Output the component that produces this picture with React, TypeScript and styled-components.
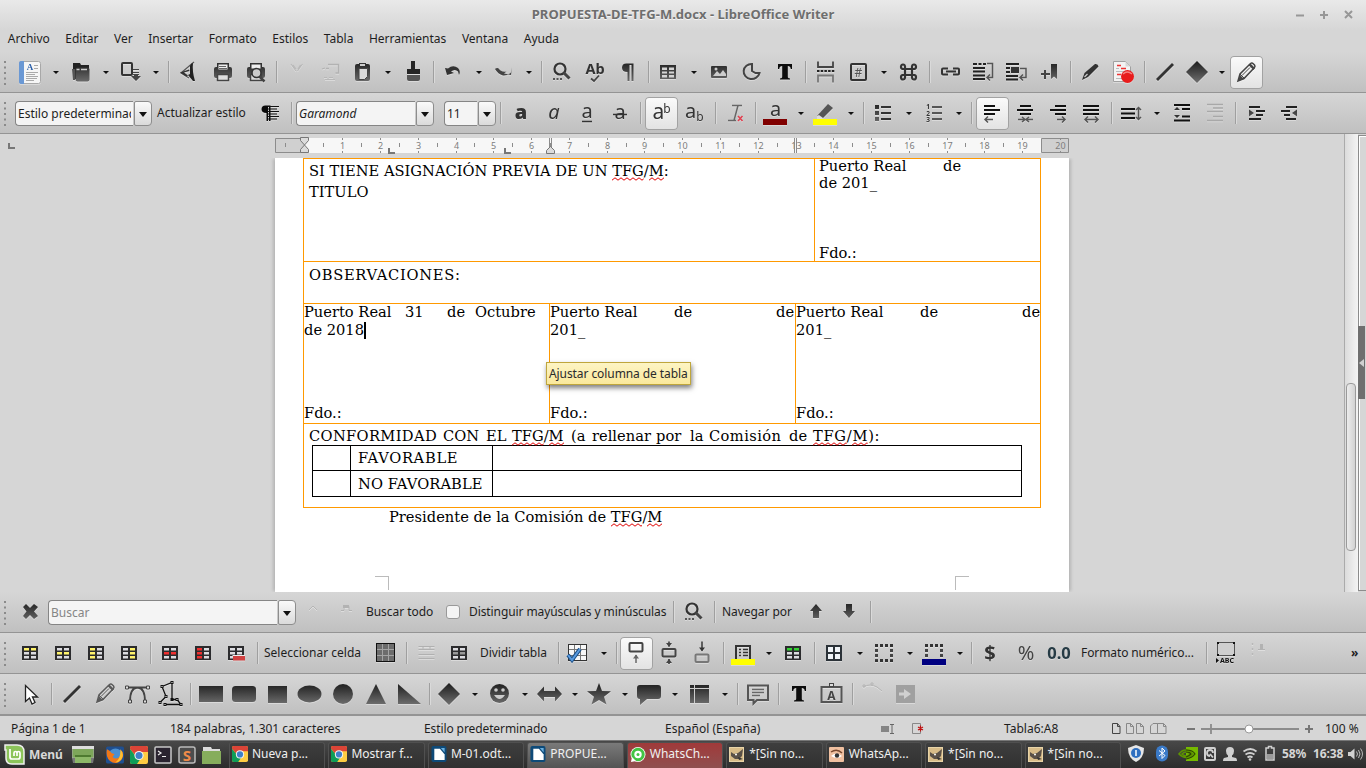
import React from "react";
import styled, { createGlobalStyle, css } from "styled-components";

const Global = createGlobalStyle`
  * { box-sizing: border-box; }
  body { margin: 0; background: #d6d6d6; overflow: hidden; }
`;

const UI = `"Noto Sans", "Open Sans", sans-serif`;
const ORANGE = "#ff9900";

const Window = styled.div`
  width: 1366px;
  height: 768px;
  display: flex;
  flex-direction: column;
  overflow: hidden;
  background: #d6d6d6;
  color: #1e1e1e;
  font: 12px/16px ${UI};
  white-space: pre;
`;

/* ---------- title and menu ---------- */

const Header = styled.header`
  height: 52px;
  flex: none;
  background: linear-gradient(#e9e9e9, #d6d6d6 30px);
`;
const TitleBar = styled.div`
  height: 28px;
  display: grid;
  grid-template-columns: 1fr auto 1fr;
  align-items: center;
`;
const Title = styled.h1`
  grid-column: 2;
  margin: 0;
  font: bold 13px/18px ${UI};
  letter-spacing: 0.03px;
  color: #6e6e6e;
  text-shadow: 0 1px 0 #f4f4f4;
`;
const WindowButtons = styled.div`
  justify-self: end;
  display: flex;
  gap: 9px;
  padding: 1px 11px 0 0;
`;
const MenuBar = styled.nav`
  display: flex;
  height: 21px;
  align-items: center;
`;
const MenuItem = styled.span`
  padding: 0 7.780px;
`;

/* ---------- toolbars ---------- */

const Toolbar = styled.div<{ $top?: number; $h?: number; $line?: number }>`
  flex: none;
  height: ${(p) => p.$h ?? 41}px;
  padding-top: ${(p) => p.$top ?? 4}px;
  display: flex;
  align-items: flex-start;
  background: linear-gradient(#d6d6d6, #c0c0c0);
  border-bottom: ${(p) => p.$line ?? 1}px solid #949494;
`;
const GripBox = styled.div`
  width: 14px;
  height: 33px;
  flex: none;
  padding: 5px 0 0 4px;
`;
const Tool = styled.div<{ $on?: boolean; $w?: number }>`
  width: ${(p) => p.$w ?? 33}px;
  height: 33px;
  flex: none;
  svg { display: block; overflow: visible; filter: drop-shadow(0 1px 0 rgba(255, 255, 255, 0.35)); }
  ${(p) =>
    p.$on &&
    css`
      background: linear-gradient(#fbfbfb, #e2e2e2);
      border-radius: 4px;
      box-shadow: inset 0 0 0 1px #a2a2a2;
    `}
`;
const Drop = styled.div`
  width: 17px;
  height: 33px;
  flex: none;
  padding: 15px 0 0 6px;
  &::before {
    content: "";
    display: block;
    width: 0;
    border: solid transparent;
    border-width: 3px 3px 0;
    border-top-color: #111;
  }
`;
const Sep = styled.div<{ $w?: number }>`
  width: ${(p) => p.$w ?? 8}px;
  height: 33px;
  flex: none;
  padding: 5px 0 0 ${(p) => Math.floor((p.$w ?? 8) / 2)}px;
  &::before {
    content: "";
    display: block;
    width: 2px;
    height: 22px;
    background: linear-gradient(90deg, #9f9f9f 1px, #dadada 1px);
  }
`;
const Label = styled.span<{ $w: number; $pl?: number; $ls?: number }>`
  width: ${(p) => p.$w}px;
  padding-left: ${(p) => p.$pl ?? 0}px;
  letter-spacing: ${(p) => p.$ls ?? 0}px;
  flex: none;
  line-height: 32px;
`;
const Combo = styled.div<{ $w: number }>`
  width: ${(p) => p.$w}px;
  height: 25px;
  margin-top: 4px;
  flex: none;
  display: flex;
`;
const Entry = styled.div<{ $muted?: boolean; $italic?: boolean }>`
  flex: 1;
  min-width: 0;
  overflow: hidden;
  margin-right: 1px;
  padding-left: 2px;
  border: 1px solid #858585;
  border-right: 0;
  border-radius: 4px 0 0 4px;
  background: #f4f4f4;
  line-height: 23px;
  color: ${(p) => (p.$muted ? "#858585" : "#1e1e1e")};
  font-style: ${(p) => (p.$italic ? "italic" : "normal")};
`;
const EntryText = styled.div`
  overflow: hidden;
  margin-right: 2px;
`;
const ComboButton = styled.div`
  width: 18px;
  border: 1px solid #8d8d8d;
  border-radius: 2px 4px 4px 2px;
  background: linear-gradient(#fafafa, #dadada);
  display: flex;
  justify-content: center;
  padding-top: 10px;
  &::before {
    content: "";
    width: 0;
    height: 0;
    border: solid transparent;
    border-width: 5px 4px 0;
    border-top-color: #111;
  }
`;
const CheckBox = styled.div`
  width: 14px;
  height: 14px;
  margin: 9px 9px 0 0;
  flex: none;
  border: 1px solid #999;
  border-radius: 3px;
  background: #f4f4f4;
`;
const Spacer = styled.div`
  flex: 1;
`;

/* ---------- document ---------- */

const Workspace = styled.main`
  height: 458px;
  flex: none;
  display: flex;
  background: #d6d6d6;
`;
const Canvas = styled.div`
  width: 1344px;
  display: grid;
  grid-template-columns: 275px 794px 1fr;
  grid-template-rows: 24px 1fr;
`;
const Page = styled.div`
  grid-column: 2;
  grid-row: 2;
  background: #fff;
  box-shadow: -3px 0 3px -1px #b5b5b5, 3px 0 3px -1px #b5b5b5;
  clip-path: inset(0 -6px);
  padding-left: 28px;
  font: 14.67px/18px "DejaVu Serif", serif;
  color: #000;
  position: relative;
`;
const DocTable = styled.div`
  width: 738px;
  border: solid ${ORANGE};
  border-width: 0 1px 1px;
`;
const DocRow = styled.div<{ $h: number }>`
  height: ${(p) => p.$h}px;
  border-top: 1px solid ${ORANGE};
  display: flex;
`;
const Cell = styled.div<{ $w?: number; $pl?: number; $pt?: number }>`
  width: ${(p) => (p.$w ? p.$w + "px" : "auto")};
  flex: ${(p) => (p.$w ? "none" : "1")};
  padding: ${(p) => p.$pt ?? 0}px 0 0 ${(p) => p.$pl ?? 0}px;
  & + & { border-left: 1px solid ${ORANGE}; }
`;
const Line = styled.div<{ $mt?: number; $ls?: number; $ml?: number }>`
  height: 18px;
  margin: ${(p) => p.$mt ?? 0}px 0 0 ${(p) => p.$ml ?? 0}px;
  display: flex;
  letter-spacing: ${(p) => p.$ls ?? 0}px;
`;
const Word = styled.span<{ $w?: number; $ls?: number }>`
  flex: none;
  width: ${(p) => (p.$w ? p.$w + "px" : "auto")};
  ${(p) => p.$ls !== undefined && `letter-spacing: ${p.$ls}px;`}
`;
const Caret = styled.i`
  width: 2px;
  height: 17px;
  margin-top: 1px;
  background: #000;
`;
const Misspelt = styled.span`
  position: relative;
  svg { position: absolute; left: 0; top: 15px; width: 100%; height: 4px; }
`;
const InnerTable = styled.div`
  width: 710px;
  margin-left: 3px;
  display: grid;
  grid-template-columns: 38px 142px 530px;
  grid-template-rows: 25px 27px;
`;
const InnerCell = styled.div<{ $last?: boolean; $low?: boolean; $ls?: number }>`
  border: solid #000;
  border-width: 1px ${(p) => (p.$last ? 1 : 0)}px ${(p) => (p.$low ? 1 : 0)}px 1px;
  padding: ${(p) => (p.$low ? 4 : 3)}px 0 0 7px;
  letter-spacing: ${(p) => p.$ls ?? 0}px;
`;
const CornerMarks = styled.div`
  width: 594px;
  margin: 50px 0 0 72px;
  display: flex;
  justify-content: space-between;
`;
const Corner = styled.i<{ $right?: boolean }>`
  width: 14px;
  height: 14px;
  border: solid #bbb;
  border-width: ${(p) => (p.$right ? "1px 0 0 1px" : "1px 1px 0 0")};
`;
const Tooltip = styled.div`
  position: absolute;
  left: 271px;
  top: 204px;
  width: 145px;
  height: 23px;
  border: 1px solid #bfa63c;
  background: linear-gradient(#fdf4c4, #fae99c);
  box-shadow: 1px 3px 5px rgba(0, 0, 0, 0.5);
  padding-left: 2px;
  font: 12px/21px ${UI};
  letter-spacing: -0.08px;
  color: #2a2a2a;
`;
const TabCorner = styled.i`
  width: 7px;
  height: 6px;
  margin: 9px 0 0 8px;
  border: solid #777;
  border-width: 0 0 2px 2px;
`;
const RulerBox = styled.div`
  grid-column: 2;
  svg { display: block; overflow: visible; }
`;
const ScrollTrack = styled.div`
  width: 14px;
  border-left: 1px solid #ababab;
  background: linear-gradient(90deg, #dcdcdc, #f4f4f4);
  padding: 249px 0 0 1px;
`;
const Thumb = styled.div`
  width: 10px;
  height: 168px;
  border: 1px solid #9a9a9a;
  border-radius: 4px;
  background: linear-gradient(90deg, #ececec, #d2d2d2);
`;
const SideRail = styled.div`
  width: 8px;
  height: 456px;
  margin-top: 1px;
  border: solid #8c8c8c;
  border-width: 1px 0 1px 1px;
  box-shadow: inset 1px 1px 0 #fff;
  padding-top: 190px;
`;
const RailHandle = styled.div`
  width: 7px;
  height: 73px;
  margin-left: -1px;
  background: #6f6f6f;
  padding: 33px 0 0 1px;
  &::before {
    content: "";
    display: block;
    width: 0;
    border: solid transparent;
    border-width: 4px 5px 4px 0;
    border-right-color: #d0d0d0;
  }
`;

/* ---------- status bar and panel ---------- */

const StatusBar = styled.footer`
  height: 24px;
  flex: none;
  display: flex;
  align-items: center;
  padding: 2px 0 0 11px;
  background: #d6d6d6;
  svg { display: block; }
`;
const Status = styled.span<{ $w: number; $ls?: number }>`
  width: ${(p) => p.$w}px;
  letter-spacing: ${(p) => p.$ls ?? 0}px;
  flex: none;
`;
const Panel = styled.div`
  height: 29px;
  flex: none;
  border-top: 1px solid #777;
  background: linear-gradient(#484848, #2b2b2b);
  display: flex;
  color: #e2e2e2;
`;
const MenuButton = styled.div`
  width: 71px;
  padding: 3px 0 0 4px;
  display: flex;
  gap: 4px;
  font-weight: bold;
  line-height: 22px;
  letter-spacing: -0.1px;
  color: #d8d8d8;
`;
const Launchers = styled.div`
  width: 158px;
  display: flex;
  padding: 5px 0 0 1px;
  gap: 6px;
  svg { display: block; flex: none; }
  svg:first-child { margin-right: 6px; }
`;
const Tasks = styled.div`
  width: 892px;
  display: grid;
  grid-template-columns: repeat(9, 1fr);
  column-gap: 3px;
  padding-top: 1px;
`;
const Task = styled.div<{ $tone?: string }>`
  display: flex;
  padding: 3px 0 0 2px;
  gap: 4px;
  border: 1px solid #505050;
  border-bottom: 0;
  border-radius: 3px 3px 0 0;
  line-height: 16px;
  color: #f0f0f0;
  background: ${(p) =>
    p.$tone === "active"
      ? "linear-gradient(#7a7a7a, #525252)"
      : p.$tone === "alert"
      ? "linear-gradient(#a03a3a, #8f5050)"
      : "linear-gradient(#3e3e3e, #303030)"};
  svg { display: block; flex: none; }
`;
const Tray = styled.div`
  flex: 1;
  display: flex;
  align-items: center;
  padding: 0 0 2px 5px;
  font-weight: bold;
  letter-spacing: -0.1px;
  color: #d6d6d6;
  svg { display: block; flex: none; }
`;
const TrayText = styled.span<{ $w: number }>`
  width: ${(p) => p.$w}px;
`;

/* ---------- drawing helpers ---------- */

const INK = "url(#ink)";
const G = ({ children, w = 33, h = 33 }: { children: React.ReactNode; w?: number; h?: number }) => (
  <svg width={w} height={h} viewBox={`0 0 ${w} ${h}`} fill="none">
    {children}
  </svg>
);
const T = ({ children, on }: { children: React.ReactNode; on?: boolean }) => (
  <Tool $on={on}>
    <G>{children}</G>
  </Tool>
);
const Grip = () => (
  <GripBox>
    <svg width="2" height="24" style={{ display: "block" }}>
      <path d="M0 0h2v2h-2zM0 5.500h2v2h-2zM0 11h2v2h-2zM0 16.500h2v2h-2zM0 22h2v2h-2z" fill="#8a8a8a" />
    </svg>
  </GripBox>
);
const F = ({ d, fill = INK }: { d: string; fill?: string }) => <path d={d} fill={fill} />;
const S = ({ d, w = 2, c = "#333" }: { d: string; w?: number; c?: string }) => (
  <path d={d} stroke={c} strokeWidth={w} />
);

const GridIcon = ({ cells = {} as Record<number, string>, rows = 3, x = 8, y = 9 }) => (
  <>
    <path d={`M${x} ${y}h16v14h-16z`} fill="#2c2c2e" />
    {Array.from({ length: rows * 2 }, (_, i) => (
      <rect
        key={i}
        x={x + 2 + (i % 2) * 7}
        y={y + 2 + Math.floor(i / 2) * 4}
        width="5"
        height="2.500"
        fill={cells[i] ?? "#dcdce0"}
      />
    ))}
  </>
);
const Magnifier = () => (
  <>
    <circle cx="15" cy="13" r="5.500" stroke="#333" strokeWidth="2.200" />
    <S d="M18.500 16.500l6 6" w={3} c="#444" />
    <F d="M8 22h2v2h-2zM11.500 22h2v2h-2zM15 22h2v2h-2z" fill="#555" />
  </>
);
const BigT = () => (
  <F d="M10 8h14v5h-1.200c-.4-2.200-1.200-3-3-3v10.500c0 1.500.6 1.800 2.200 2v1H12v-1c1.600-.2 2.200-.5 2.200-2V10c-1.800 0-2.600.8-3 3H10z" fill="#0c0c0c" />
);
const Letter = ({ x, y, s, children, w = "normal", i = "normal", c = "#333" }: any) => (
  <text x={x} y={y} fontSize={s} fontFamily={UI} fontWeight={w} fontStyle={i} fill={c} textAnchor="middle">
    {children}
  </text>
);
const Diamond = ({ r = 11 }) => <F d={`M16 ${16 - r}l${r} ${r}l${-r} ${r}l${-r} ${-r}z`} />;
const PencilOutline = ({ c = "#444" }) => (
  <>
    <path d="M8 25l2-7 10.500-10.500q1.500-1 3 .5l1 1q1 1.500 0 2.500L14 22.500z" stroke={c} strokeWidth="1.500" />
    <path d="M8 25l2-6 4 4zM18.500 9l5 5 1.500-2-4.500-4.500z" fill={c} />
    <path d="M12 19.500l8-8M10 18l4.500 4.500" stroke={c} />
  </>
);
const Zig = () => (
  <svg>
    <defs>
      <pattern id="zig" width="6" height="4" patternUnits="userSpaceOnUse">
        <path d="M0 3.200L3 .8L6 3.200" stroke="#e00000" strokeWidth="1" fill="none" />
      </pattern>
    </defs>
    <rect width="100%" height="4" fill="url(#zig)" />
  </svg>
);
const Tfg = () => (
  <>
    <Misspelt>TFG<Zig /></Misspelt>/<Misspelt>M<Zig /></Misspelt>
  </>
);
const Combobox = ({ w, children, italic, muted }: any) => (
  <Combo $w={w}>
    <Entry $italic={italic} $muted={muted}>
      <EntryText>{children}</EntryText>
    </Entry>
    <ComboButton />
  </Combo>
);

/* ---------- ruler ---------- */

const CM = 37.77;
const Ruler = () => (
  <RulerBox>
    <svg width="794" height="24">
      <rect x="29" y="4" width="738" height="15" fill="#f7f7f7" />
      <path d="M29 4.500H.5v14H29M766.500 4.500h27v14h-27z" stroke="#8c8c8c" fill="#d0d0d0" />
      {Array.from({ length: 20 }, (_, i) => {
        const x = Math.round(29.5 + (i + 1) * CM) + 0.5;
        const h = Math.round(29.5 + (i + 0.5) * CM) + 0.5;
        return (
          <g key={i}>
            <path d={`M${x} 4v2M${x} 17v2${i < 19 ? `M${h} 9v4` : ""}`} stroke="#8c8c8c" />
            <text x={x} y="15" fontSize="9" fontFamily={UI} fill="#7d7d7d" textAnchor="middle">
              {i + 1}
            </text>
          </g>
        );
      })}
      <path d="M10.500 9v4" stroke="#8c8c8c" />
      <path d="M519.500 4v15M521.500 4v15M274.500 4v10M276.500 4v10" stroke="#8c8c8c" />
      <path d="M114 14v5h6M230 14v5h6" stroke="#777" strokeWidth="2" fill="none" />
      <path d="M25.500 3.500h8v3l-4 4.500l4 4.500v3h-8v-3l4-4.500l-4-4.500zM271.500 19.500v-3l4-4l4 4v3z" stroke="#777" fill="#dcdcdc" />
    </svg>
  </RulerBox>
);

/* ---------- toolbars content ---------- */

const StandardBar = () => (
  <Toolbar>
    <Grip />
    <T>
      <rect x="5.500" y="5.500" width="21" height="22" rx="2" fill="#f6f6f6" stroke="#a8a8a8" />
      <path d="M5 7q0-2 2-2h3v23H7q-2 0-2-2z" fill="#6a98d4" />
      <text x="16" y="14" fontSize="9" fontWeight="bold" fontFamily="Liberation Serif" fill="#2b5fa8" textAnchor="middle">A</text>
      <S d="M20 9.500h4M20 12.500h4M12 16.500h12M12 18.500h9M12 20.500h12M12 22.500h11M12 24.500h8" w={1} c="#aaa" />
    </T>
    <Drop />
    <T>
      <F d="M9 7h7l1 2h8v3H14l-2 11h-3z" fill="#222" />
      <F d="M8 13h3v11H9z" fill="#555" />
      <rect x="11.500" y="11.500" width="14" height="14" rx="2" fill={INK} />
      <S d="M12.500 13.500h3M17 13.500h6" w={1.500} c="#ccc" />
    </T>
    <Drop />
    <T>
      <rect x="8" y="7" width="10" height="12" rx="1" stroke="#333" strokeWidth="2" />
      <S d="M19 13.500h6M19 16.500h6M19 18.500h6" w={1.200} c="#444" />
      <F d="M20 18h4v2h3l-5 5-5-5h3z" fill="#444" />
    </T>
    <Drop />
    <Sep $w={9} />
    <T>
      <path d="M21 6L8 17l8 5" stroke="#555" strokeWidth="1.200" />
      <F d="M7 16.500l9-3 .5 1.500-5.500 1.500 4 3-1.500 1z" fill="#333" />
      <F d="M17 10q1-3 3-3-1 8 2 18h-2l-5-6 2-1z" fill="#222" />
    </T>
    <T>
      <F d="M11 7h12v6H11z" fill="#333" />
      <rect x="8" y="11" width="18" height="11" rx="2" fill={INK} />
      <rect x="12.500" y="8.500" width="9" height="5" fill="#eee" />
      <S d="M13 10.500h7M13 12.500h8" w={1} c="#666" />
      <rect x="11.500" y="18.500" width="11" height="6" fill="#ddd" stroke="#444" strokeWidth="1.500" />
    </T>
    <T>
      <F d="M11 7h12v6H11z" fill="#333" />
      <rect x="8" y="11" width="18" height="11" rx="2" fill={INK} />
      <rect x="12.500" y="8.500" width="9" height="4" fill="#eee" />
      <rect x="11.500" y="18.500" width="11" height="6" fill="#ddd" stroke="#444" strokeWidth="1.500" />
      <circle cx="17.500" cy="17" r="4.500" fill="#ccc" stroke="#333" strokeWidth="1.500" />
      <S d="M20.500 20.500l5 5" w={2.500} c="#444" />
    </T>
    <Sep />
    <T><S d="M11 8l5 7M22.500 8l-5 7M13 9l3 4M20.500 9l-2.500 4" w={1.100} c="#b8b8b8" /></T>
    <T>
      <path d="M15 8.500h10.500v8.500h-3M13 12.500h3M9 13l3-1" stroke="#b2b2b2" strokeWidth="1.300" />
      <S d="M11 21.500h3M16 21.500h4M12 23.500h10" w={1} c="#b8b8b8" />
    </T>
    <T>
      <rect x="9" y="8" width="15" height="17" rx="2" fill={INK} />
      <F d="M13 9v-2h7v2z" fill="#333" />
      <rect x="14" y="8" width="5" height="2" fill="#ccc" />
      <path d="M13 12.500h8.500v8l-3 3H13z" fill="#d8d8d8" stroke="#444" />
    </T>
    <Drop />
    <T>
      <F d="M15 5h4v8h5v5H11v-5h4z" fill="#262626" />
      <F d="M11 19h13v4q0 2-2 2H13q-2 0-2-2z" fill="#555" />
    </T>
    <Sep />
    <T><F d="M8 12l2 7 7-2-3-1.500q4-3 7 0l1 3.500q2-4-1-7-5-3.500-10 .5z" fill="#333" /></T>
    <Drop />
    <T><F d="M25 11.500l-1 7.500-7-1.500 2.500-2q-3 1-6-1l-2.500-2.500q-2.500 0-3 1 3 5 8 6.500 4 .5 8-3z" fill="#444" /></T>
    <Drop />
    <Sep />
    <T><Magnifier /></T>
    <T>
      <Letter x={17} y={18} s={14.5} w="bold">Ab</Letter>
      <S d="M13 22.500l3 2.500 5-5.500" w={1.800} c="#444" />
    </T>
    <T><F d="M13.500 7.500h9V25h-2V9h-2v16h-2v-9q-5.500 0-5.500-4.200t4.500-4.300z" /></T>
    <Sep />
    <T>
      <rect x="8" y="9" width="16" height="14" fill={INK} />
      <F d="M10 11.500h5v2.500h-5zM17 11.500h5v2.500h-5zM10 15.500h5v2h-5zM17 15.500h5v2h-5zM10 19h5v2.500h-5zM17 19h5v2.500h-5z" fill="#d4d4d4" />
    </T>
    <Drop />
    <T>
      <rect x="9" y="10" width="16" height="12" rx="1" fill={INK} />
      <F d="M11 20l4-5 3 3 3-4 3 4v2z" fill="#ccc" />
      <circle cx="14" cy="13" r="1.500" fill="#ccc" />
    </T>
    <T>
      <path d="M17 8a8 7.500 0 1 0 7.500 9h-4l-3.500-2z" stroke="#444" strokeWidth="2" />
    </T>
    <T><BigT /></T>
    <Sep />
    <T>
      <path d="M9 5.500v5.500h15V5.500" stroke="#444" strokeWidth="1.800" />
      <path d="M8 15h18" stroke="#222" strokeWidth="2" strokeDasharray="2.500 1.200" />
      <path d="M9 26.500v-7h15v7" stroke="#777" strokeWidth="1.800" />
    </T>
    <T>
      <rect x="9" y="8" width="15" height="16" rx="1" stroke="#333" strokeWidth="2" />
      <Letter x={16.5} y={20.5} s={12} c="#555">#</Letter>
    </T>
    <Drop />
    <T>
      <path d="M13 13h7v6h-7zM13 13h-2.500a2 2.300 0 1 1 2.500-2.500zM20 13h2.500a2 2.300 0 1 0-2.500-2.500zM13 19h-2.500a2 2.300 0 1 0 2.500 2.500zM20 19h2.500a2 2.300 0 1 1-2.500 2.500z" stroke="#333" strokeWidth="2.200" />
    </T>
    <Sep $w={9} />
    <T><path d="M14 12.500H9q-1 0-1 1v4q0 1 1 1h5M19 12.500h5q1 0 1 1v4q0 1-1 1h-5M12 15.500h10" stroke="#333" strokeWidth="2" /></T>
    <T>
      <S d="M6 8h4M11.500 8h3M16 8h3M6 12h12M6 15.500h12M6 19.500h12M6 23h12" w={2.200} c="#222" />
      <path d="M20 7.500h5.500v14h-5M23 18.500l-3 3 3 3" stroke="#555" strokeWidth="1.500" />
    </T>
    <T>
      <S d="M6 8h13M6 12h4M6 16h4M6 20h12M6 23.500h12" w={2.200} c="#222" />
      <F d="M11 11h8v6h-8z" fill="#333" />
      <path d="M20 12.500h6v9h-5M23 18.500l-3 3 3 3" stroke="#555" strokeWidth="1.500" />
    </T>
    <T>
      <F d="M18 8h6v15l-3-2.500-3 2.500z" />
      <F d="M8 17h3v-3h2v3h4v2h-4v4h-2v-4H8z" fill="#444" />
    </T>
    <Sep />
    <T>
      <F d="M8 24l2.500-7L21 8q3-.5 3.500 2.500L14 21z" fill="#333" />
      <S d="M10.500 21l3-3" w={1.300} c="#ccc" />
    </T>
    <T>
      <path d="M6.500 5.500h12l5 5v15h-17z" fill="#f3f3f3" stroke="#a0a0a0" />
      <path d="M18.500 5.500v5h5z" fill="#d8d8d8" />
      <S d="M10 9.500h4M14 12.500h5M10 18.500h4" w={1.500} c="#e33" />
      <S d="M9 15.500h10M9 12.500h3M9 22.500h6" w={1} c="#bbb" />
      <circle cx="20.500" cy="20.500" r="6.500" fill="#e81c1c" />
      <path d="M16 18q4-4 9 0" stroke="#f58080" strokeWidth="1.500" />
    </T>
    <Sep />
    <T><S d="M9 24L25 8" w={2.800} c="#333" /></T>
    <Tool $w={32}><G w={32}><Diamond /></G></Tool>
    <Drop />
    <T on><PencilOutline /></T>
  </Toolbar>
);

const FormatBar = () => (
  <Toolbar>
    <Grip />
    <Tool $w={1} />
    <Combobox w={137}>Estilo predeterminado</Combobox>
    <Label $w={102} $pl={5}>Actualizar estilo</Label>
    <T>
      <F d="M11.500 8.500h5V24h-1.500V10h-1v14h-1.500v-8q-5 0-5-3.700t4-3.800z" fill="#0a0a0a" />
      <S d="M14 9.500h11M14 12h9M14 14.500h11M14 17h9M14 19.500h11M14 22h9" w={1.200} c="#111" />
    </T>
    <Sep $w={9} />
    <Combobox w={138} italic>Garamond</Combobox>
    <Tool $w={10} />
    <Combobox w={52}>11</Combobox>
    <Sep />
    <T><Letter x={17} y={22} s={20} w="900">a</Letter></T>
    <T><Letter x={17} y={22} s={20} i="italic">a</Letter></T>
    <T><Letter x={17} y={21} s={20}>a</Letter><S d="M12 24.500h10" w={1.500} /></T>
    <T><Letter x={17} y={22} s={20}>a</Letter><S d="M10 17.500h14" w={1.500} /></T>
    <Sep $w={9} />
    <T on><Letter x={13.5} y={21.5} s={21}>a</Letter><Letter x={22} y={16} s={12}>b</Letter></T>
    <T><Letter x={12.500} y={21} s={20}>a</Letter><Letter x={22} y={24} s={12}>b</Letter></T>
    <Sep />
    <T>
      <S d="M13 8.500h10M19 8.500l-4 15M9 23.500h8" w={1.500} c="#666" />
      <S d="M19 19l4.500 5M23.500 19l-4.500 5" w={1.600} c="#e04050" />
    </T>
    <Sep $w={7} />
    <T><Letter x={16.5} y={19} s={20}>a</Letter><F d="M4 22h24v6H4z" fill="#800000" /></T>
    <Drop />
    <T>
      <F d="M8 19l11-12 5 4-10 10-5 1z" fill="#555" />
      <F d="M8 19l2-1 4 3-1 1H8z" fill="#ddd" />
      <F d="M4 22h24v6H4z" fill="#ffff00" />
    </T>
    <Drop />
    <Sep />
    <T>
      <F d="M8 8h4v4H8zM8 14h4v4H8zM8 20h4v4H8z" />
      <S d="M14 10h10M14 16h10M14 22h10" w={2} />
    </T>
    <Drop />
    <T>
      <Letter x={11} y={12} s={6.500} w="bold">1</Letter>
      <Letter x={11} y={18.500} s={6.500} w="bold">2</Letter>
      <Letter x={11} y={25} s={6.500} w="bold">3</Letter>
      <S d="M15 10h10M15 16h10M15 22h10" w={2} c="#555" />
    </T>
    <Drop />
    <Sep $w={9} />
    <T on><S d="M8 9h11M8 13h16M8 17h11" w={2} c="#111" /><S d="M9 22.500h8M12 19.500l-3 3 3 3" w={1.500} c="#555" /></T>
    <T>
      <S d="M11 9h11M8 13h16M11 17h11" w={2} c="#111" />
      <S d="M9 22.500h6M13 20l3 2.500-3 2.500M24 22.500h-6M20 20l-3 2.500 3 2.500" w={1.500} c="#555" />
    </T>
    <T><S d="M13 9h11M8 13h16M13 17h11" w={2} c="#111" /><S d="M15 22.500h8M20 19.500l3 3-3 3" w={1.500} c="#555" /></T>
    <T><S d="M8 9h16M8 13h16M8 17h16" w={2} c="#111" /><S d="M10 22.500h13M13 19.500l-3 3 3 3M20 19.500l3 3-3 3" w={1.500} c="#555" /></T>
    <Sep $w={7} />
    <T><S d="M6 12h14M6 16.500h14M6 21h14" w={2} c="#111" /><S d="M23.500 11v11M21 13l2.500-2.500 2.500 2.500M21 20l2.500 2.500 2.500-2.500" w={1.500} c="#555" /></T>
    <Drop />
    <T>
      <S d="M9 8h16M17 12h8M17 19.500h8M9 23.500h16" w={2} c="#111" />
      <F d="M9 13l3-3 3 3zM9 18h6l-3 3z" fill="#333" />
    </T>
    <T><S d="M9 7.500h16M15 11h10M9 14.500h16M15 19.500h10M9 23.500h16" w={1.500} c="#a8a8a8" /></T>
    <Sep $w={9} />
    <T>
      <S d="M9 10h11M16 14h9M16 18h7M9 22h12" w={2} c="#222" />
      <F d="M9 12.500l5 3.500-5 3.500z" />
    </T>
    <T>
      <S d="M13 10h11M8 14h9M11 18h6M13 22h10" w={2} c="#222" />
      <F d="M24 12.500l-5 3.500 5 3.500z" />
    </T>
  </Toolbar>
);

const FindBar = () => (
  <Toolbar>
    <Grip />
    <T><F d="M9 11l3-3 4 4 4-4 4 3-4 4.500 4 4.500-4 3-4-4-4 4-3-3 3.500-4.500z" /></T>
    <Tool $w={1} />
    <Combobox w={248} muted>Buscar</Combobox>
    <Tool $w={1} />
    <T><S d="M12 14l4-4 4 4" c="#b5b5b5" w={1} /></T>
    <T><path d="M11 14.500h3v-4h5v4h3" stroke="#b2b2b2" /><F d="M13 9h6v3h-6z" fill="#b2b2b2" /></T>
    <Label $w={83} $pl={3} $ls={-0.05}>Buscar todo</Label>
    <CheckBox />
    <Label $w={200} $ls={-0.09}>Distinguir mayúsculas y minúsculas</Label>
    <Sep />
    <T><Magnifier /></T>
    <Sep />
    <Label $w={82} $pl={4} $ls={-0.05}>Navegar por</Label>
    <T><F d="M16 8l6 7h-3v7h-6v-7h-3z" /></T>
    <T><F d="M16 22l6-7h-3V8h-6v7h-3z" /></T>
    <Sep />
  </Toolbar>
);

const Y = "#fff36b", R = "#f03030";
const DottedBox = ({ h = 18 }) => (
  <>
    <path d={`M7 8.500h18${h > 13 ? `M7 ${8.5 + h}h18` : ""}`} stroke="#333" strokeWidth="3" strokeDasharray="3 2" />
    <path d={`M8.500 12v${h - 4}M23.500 12v${h - 4}`} stroke="#444" strokeWidth="3" strokeDasharray="3 2" />
  </>
);
const TableBar = () => (
  <Toolbar>
    <Grip />
    <T><GridIcon cells={{ 0: Y, 1: Y }} /></T>
    <T><GridIcon cells={{ 2: Y, 3: Y }} /></T>
    <T><GridIcon cells={{ 0: Y, 2: Y, 4: Y }} /></T>
    <T><GridIcon cells={{ 1: Y, 3: Y, 5: Y }} /></T>
    <Sep />
    <T><GridIcon cells={{ 2: R, 3: R }} /></T>
    <T><GridIcon cells={{ 0: R, 2: R, 4: R }} /></T>
    <T><GridIcon /><F d="M13 18.500h12v5H13z" fill="#d04040" /><S d="M12.500 18.500h12.500" w={1} c="#eee" /></T>
    <Sep />
    <Label $w={108} $pl={3}>Seleccionar celda</Label>
    <T>
      <rect x="7.500" y="6.500" width="18" height="18" fill="#6c6c6c" stroke="#111" />
      <S d="M13.500 7v17M19.500 7v17M8 12.500h17M8 18.500h17" w={1} c="#a4a4a4" />
    </T>
    <Sep />
    <T><path d="M8.500 9.500h16M8.500 12.500h16M8.500 17.500h16M8.500 21.500h16M13 9v4M20 9v4" stroke="#b0b0b0" /></T>
    <T><GridIcon cells={{ 2: "#999", 3: "#999" }} /></T>
    <Label $w={79} $pl={4} $ls={-0.08}>Dividir tabla</Label>
    <Sep $w={7} />
    <T>
      <rect x="6.500" y="7.500" width="18" height="16" fill="#f8f8f8" stroke="#333" />
      <S d="M12.500 8v15M18.500 8v15M7 12.500h17M7 18.500h17" w={1} c="#777" />
      <path d="M6 18l4 5 8-11" stroke="#1c4f85" strokeWidth="4" />
      <path d="M6 18l4 5 8-11" stroke="#5a9be0" strokeWidth="2" />
    </T>
    <Drop />
    <Sep />
    <T on>
      <rect x="9.500" y="6" width="13" height="8.500" rx="1" stroke="#444" strokeWidth="2" />
      <S d="M16 18v8" w={1.500} c="#666" /><F d="M13 21.500l3-4 3 4z" fill="#666" />
    </T>
    <T>
      <rect x="9.500" y="12" width="13" height="7.500" rx="1" stroke="#444" strokeWidth="2" />
      <S d="M16 4.500v5M16 22v5" w={1.500} /><F d="M13 6l3 4 3-4zM13 26l3-4 3 4z" fill="#444" />
    </T>
    <T>
      <rect x="9.500" y="17.500" width="13" height="7.500" rx="1" stroke="#777" strokeWidth="2" />
      <S d="M16 4.500v9" w={1.500} /><F d="M13 10.500l3 4 3-4z" fill="#333" />
    </T>
    <Sep />
    <T>
      <path d="M9 22V9h14v13" stroke="#333" strokeWidth="2" />
      <S d="M12 12.500h2M16 12.500h5M12 15.500h2M16 15.500h5M12 18.500h2M16 18.500h5" w={1.300} />
      <F d="M4 22h24v6H4z" fill="#ffff00" />
    </T>
    <Drop />
    <T><GridIcon cells={{ 0: "#35d035", 1: "#35d035" }} /></T>
    <Sep />
    <T>
      <rect x="8" y="8" width="16" height="16" fill="#2b3238" />
      <F d="M10 10h5v5h-5zM17 10h5v5h-5zM10 17h5v5h-5zM17 17h5v5h-5z" fill="#f0f4f8" />
    </T>
    <Drop />
    <T><DottedBox h={15} /></T>
    <Drop />
    <T><DottedBox h={12} /><F d="M4 22h24v6H4z" fill="#000080" /></T>
    <Drop />
    <Sep $w={7} />
    <T><Letter x={15} y={22.5} s={20} w="bold">$</Letter></T>
    <Tool $w={1} />
    <T><Letter x={17} y={22.500} s={20} c="#444">%</Letter></T>
    <T><Letter x={17} y={22} s={16.500} w="bold" c="#263b45">0.0</Letter></T>
    <Label $w={127} $pl={6} $ls={-0.1}>Formato numérico...</Label>
    <Sep />
    <T>
      <path d="M7.500 5.500h17v13h-17z" stroke="#555" fill="#cfcfcf" />
      <F d="M7 5h2v2H7zM23 5h2v2h-2zM7 17h2v2H7zM23 17h2v2h-2zM6 21l3 2.500-3 2.500z" fill="#111" />
      <Letter x={17} y={26} s={7} w="bold" c="#111">ABC</Letter>
    </T>
    <T><path d="M9.500 6v12" stroke="#b8b8b8" strokeDasharray="2 3" strokeWidth="1.500" /><F d="M15 12h2V7h3v5h2v1h-7z" fill="#b2b2b2" /></T>
    <Spacer />
    <Label $w={15}><b>»</b></Label>
  </Toolbar>
);

const DrawBar = () => (
  <Toolbar $h={42} $line={2}>
    <Grip />
    <T><path d="M11.500 7.500v16l4-3.500 2.500 6 3-1.500-2.500-5.500h5z" fill="#fff" stroke="#222" strokeWidth="1.300" /></T>
    <Sep />
    <T><S d="M9 24L25 8" w={2.800} c="#333" /></T>
    <T><g transform="translate(1 -1)"><PencilOutline c="#5a5a5a" /></g></T>
    <T>
      <path d="M9 23.500Q9 10 16.500 9.500Q24 10 24 23.500M6 9.500h21" stroke="#444" strokeWidth="1.800" />
      <path d="M4.500 8h3v3h-3zM25.500 8h3v3h-3zM7.500 22h3v3h-3zM22.500 22h3v3h-3z" fill="#ddd" stroke="#444" />
    </T>
    <T>
      <path d="M8 8.500l10-4v17h5l4 5H11M8 8.500l4 10-6 6" stroke="#111" strokeWidth="1.300" />
      <F d="M6.500 7h3v3h-3zM16.500 3h3v3h-3zM10.500 17h3v3h-3zM4.500 23h3v3h-3zM21.500 20h3v3h-3zM25.500 25h3v3h-3zM9.500 25h3v3h-3zM16.500 20h3v3h-3z" fill="#111" />
      <F d="M7.500 8h1v1h-1zM17.500 4h1v1h-1zM11.500 18h1v1h-1zM5.500 24h1v1h-1zM22.500 21h1v1h-1zM26.500 26h1v1h-1zM10.500 26h1v1h-1z" fill="#fff" />
    </T>
    <Sep $w={7} />
    <T><rect x="5" y="8" width="24" height="16" fill={INK} /></T>
    <T><rect x="5" y="8" width="24" height="16" rx="3.500" fill={INK} /></T>
    <T><rect x="8" y="8" width="19" height="17" fill={INK} /></T>
    <T><ellipse cx="16.500" cy="16" rx="12" ry="8.500" fill={INK} /></T>
    <T><circle cx="17" cy="16" r="10" fill={INK} /></T>
    <T><F d="M17 6l10 20H7z" /></T>
    <T><F d="M6 6l23 20H6z" /></T>
    <Sep />
    <T><Diamond /></T>
    <Drop />
    <T>
      <circle cx="16.500" cy="15.500" r="9.500" fill={INK} />
      <circle cx="13" cy="12" r="1.800" fill="#ccc" /><circle cx="20" cy="12" r="1.800" fill="#ccc" />
      <path d="M11 17q5.500 8 11 0z" fill="#ccc" />
    </T>
    <Drop />
    <T><F d="M4 16l7-7.500v4.500h11V8.500l7 7.500-7 7.500V19H11v4.500z" /></T>
    <Drop />
    <T><F d="M16 5l3 8 9 .3-7 5.400 2.500 7.800-7.500-4.600-7.500 4.600 2.500-7.800-7-5.400 9-.3z" /></T>
    <Drop />
    <T><F d="M7 7h18q3 0 3 3v8q0 3-3 3H14l-7 6v-6q-3 0-3-3v-8q0-3 3-3z" /></T>
    <Drop />
    <T><rect x="7" y="7" width="19" height="18" fill={INK} /><S d="M11.500 7v18M7 10.500h19" w={1} c="#ccc" /></T>
    <Drop />
    <Sep />
    <T>
      <path d="M7 7.500h20v14.500H16l-3.500 3.500v-3.500H7z" stroke="#555" strokeWidth="2" />
      <S d="M11 11.500h12M11 14.500h12M11 17.500h8" w={1.500} c="#666" />
    </T>
    <Sep />
    <T><BigT /></T>
    <T>
      <rect x="6.500" y="9" width="20" height="15" stroke="#555" strokeWidth="2" />
      <rect x="14.500" y="5.500" width="4" height="3" stroke="#444" fill="#ddd" />
      <Letter x={16.5} y={21.500} s={12} w="bold" c="#444">A</Letter>
    </T>
    <Sep />
    <T><path d="M7 9q7-4 14 0l5 4" stroke="#b4b4b4" /><path d="M7 7h2v2H7zM15 5h2v2h-2z" stroke="#b4b4b4" /></T>
    <T><rect x="7" y="7" width="19" height="18" fill="#a0a0a0" /><F d="M10 14.500h5v-3.500l7 5-7 5v-3.500h-5z" fill="#d0d0d0" /></T>
  </Toolbar>
);

/* ---------- panel icons ---------- */

const Chrome = ({ s = 18 }) => (
  <svg width={s} height={s} viewBox="0 0 18 18">
    <rect width="18" height="18" rx="2" fill="#ffcd43" />
    <path d="M0 2q0-2 2-2h14q2 0 2 2v4H9L6 10 0 3z" fill="#db4437" />
    <path d="M0 3l6 7.500 4 3L7 18H2q-2 0-2-2z" fill="#0f9d58" />
    <circle cx="9" cy="9.500" r="4.600" fill="#f4f4f4" />
    <circle cx="9" cy="9.500" r="3.500" fill="#4080c8" />
  </svg>
);
const Writer = () => (
  <svg width="16" height="16" viewBox="0 0 16 17">
    <rect width="16" height="17" rx="2" fill="#0e4a78" />
    <path d="M3 3h6l5 6v6H3z" fill="#fff" />
    <path d="M10 2h4v5z" fill="#6ab0e0" />
  </svg>
);
const Gimp = () => (
  <svg width="16" height="17">
    <rect x=".500" y="1.500" width="14" height="14" fill="#d8bc88" stroke="#e8d4a8" />
    <path d="M2 6l3 2 4-1 5-4-1 7-3 3H6L2 10z" fill="#5a5148" />
    <circle cx="7" cy="8.500" r="1" fill="#fff" />
    <path d="M9 11l5 2-4 1z" fill="#333" />
  </svg>
);
const Whats = () => (
  <svg width="16" height="17">
    <circle cx="8" cy="8.500" r="7.500" fill="#fff" />
    <circle cx="8" cy="8.500" r="5.200" fill="none" stroke="#43c443" strokeWidth="3" />
    <path d="M1 16l1-5 4 4z" fill="#fff" />
    <circle cx="8" cy="8.500" r="1.500" fill="#43c443" />
  </svg>
);
const Eye = () => (
  <svg width="16" height="17">
    <rect y="1" width="15" height="15" rx="1" fill="#f0c0a0" />
    <path d="M2 6q6-4 11 1" stroke="#7a4a30" fill="none" strokeWidth="1.500" />
    <path d="M2 10q5-5 11 0-5 4-11 0z" fill="#fff" />
    <circle cx="8" cy="9.500" r="2.200" fill="#333" />
  </svg>
);

const tasks: [React.ReactNode, string, string?][] = [
  [<Chrome s={16} />, "Nueva p..."],
  [<Chrome s={16} />, "Mostrar f..."],
  [<Writer />, "M-01.odt..."],
  [<Writer />, "PROPUE...", "active"],
  [<Whats />, "WhatsCh...", "alert"],
  [<Gimp />, "*[Sin no..."],
  [<Eye />, "WhatsAp..."],
  [<Gimp />, "*[Sin no..."],
  [<Gimp />, "*[Sin no..."],
];

const menus = ["Archivo", "Editar", "Ver", "Insertar", "Formato", "Estilos", "Tabla", "Herramientas", "Ventana", "Ayuda"];

export default function App() {
  return (
    <Window>
      <Global />
      <Header>
        <TitleBar>
          <Title>PROPUESTA-DE-TFG-M.docx - LibreOffice Writer</Title>
          <WindowButtons>
            <svg width="64" height="16">
              <path d="M5 8.500h8M29 8h8M33 4v8M54 4l7 7M61 4l-7 7" stroke="#979797" strokeWidth="2" />
            </svg>
          </WindowButtons>
        </TitleBar>
        <MenuBar>
          {menus.map((m) => (
            <MenuItem key={m}>{m}</MenuItem>
          ))}
        </MenuBar>
        <svg width="0" height="0" style={{ display: "block" }}>
          <linearGradient id="ink" gradientUnits="userSpaceOnUse" x1="0" x2="0" y1="5" y2="28">
            <stop stopColor="#1c1c1c" />
            <stop offset="1" stopColor="#747474" />
          </linearGradient>
        </svg>
      </Header>
      <StandardBar />
      <FormatBar />
      <Workspace>
        <Canvas>
          <TabCorner />
          <Ruler />
          <Page>
            <DocTable>
              <DocRow $h={103}>
                <Cell $w={510} $pl={5} $pt={3}>
                  <Line><Word>SI TIENE ASIGNACIÓN PREVIA DE UN <Tfg />:</Word></Line>
                  <Line $mt={3}>TITULO</Line>
                </Cell>
                <Cell $pl={4} $pt={0}>
                  <Line $mt={-2}><Word $w={124}>Puerto Real</Word><Word>de</Word></Line>
                  <Line $mt={-1}>de 201_</Line>
                  <Line $mt={52}>Fdo.:</Line>
                </Cell>
              </DocRow>
              <DocRow $h={42}>
                <Cell $pl={5} $pt={4}><Line $ls={0.7}>OBSERVACIONES:</Line></Cell>
              </DocRow>
              <DocRow $h={120}>
                <Cell $w={245}>
                  <Line $mt={-1}>
                    <Word $w={101}>Puerto Real</Word><Word $w={42}>31</Word><Word $w={28}>de</Word><Word>Octubre</Word>
                  </Line>
                  <Line>de 2018<Caret /></Line>
                  <Line $mt={65}>Fdo.:</Line>
                </Cell>
                <Cell $w={246}>
                  <Line $mt={-1}><Word $w={124}>Puerto Real</Word><Word $w={102}>de</Word><Word>de</Word></Line>
                  <Line>201_</Line>
                  <Line $mt={65}>Fdo.:</Line>
                </Cell>
                <Cell>
                  <Line $mt={-1}><Word $w={124}>Puerto Real</Word><Word $w={102}>de</Word><Word>de</Word></Line>
                  <Line>201_</Line>
                  <Line $mt={65}>Fdo.:</Line>
                </Cell>
              </DocRow>
              <DocRow $h={84}>
                <Cell $pl={5} $pt={3}>
                  <Line>
                    <Word $w={134} $ls={0.35}>CONFORMIDAD</Word><Word $w={43}>CON</Word><Word $w={26}>EL</Word>
                    <Word $w={59}><Tfg /></Word><Word $w={21}>(a</Word><Word $w={64}>rellenar</Word><Word $w={34}>por</Word>
                    <Word $w={19}>la</Word><Word $w={80} $ls={0.4}>Comisión</Word><Word $w={24}>de</Word>
                    <Word $ls={0.7}><Tfg />):</Word>
                  </Line>
                  <InnerTable>
                    <InnerCell /><InnerCell $ls={0.7}>FAVORABLE</InnerCell><InnerCell $last />
                    <InnerCell $low /><InnerCell $low $ls={0.1}>NO FAVORABLE</InnerCell><InnerCell $low $last />
                  </InnerTable>
                </Cell>
              </DocRow>
            </DocTable>
            <Line $ml={86}><Word>Presidente de la Comisión de <Tfg /></Word></Line>
            <CornerMarks><Corner /><Corner $right /></CornerMarks>
            <Tooltip>Ajustar columna de tabla</Tooltip>
          </Page>
        </Canvas>
        <ScrollTrack><Thumb /></ScrollTrack>
        <SideRail><RailHandle /></SideRail>
      </Workspace>
      <FindBar />
      <TableBar />
      <DrawBar />
      <StatusBar>
        <Status $w={159} $ls={-0.1}>Página 1 de 1</Status>
        <Status $w={254}>184 palabras, 1.301 caracteres</Status>
        <Status $w={241} $ls={-0.1}>Estilo predeterminado</Status>
        <Status $w={215}>Español (España)</Status>
        <Status $w={124}>
          <svg width="60" height="16">
            <path d="M1 5h8v6H1z" fill="#858585" />
            <path d="M10 3.500h4M12 3.500v9M10 12.500h4" stroke="#666" fill="none" />
            <path d="M32.500 2.500h8v10h-8z" stroke="#888" fill="none" />
            <path d="M40.500 4.500v6M38 6l5 3M43 6l-5 3" stroke="#c01010" strokeWidth="1.200" />
          </svg>
        </Status>
        <Status $w={107}>Tabla6:A8</Status>
        <svg width="214" height="16" fill="none">
          <path d="M1.500 2.500h5l2.500 3v7h-7.500zM6.500 2.500v3H9" stroke="#444" />
          <path d="M15.500 2.500h4l3 3v7h-7zM19.500 2.500v3h3M25.500 2.500h4l3 3v7h-7zM29.500 2.500v3h3M39.500 5l2.500-2.500h4.500v10h-7zM46.500 2.500h6l2.500 2.500v7.500h-8.500zM52.500 2.500v3h2.500" stroke="#888" />
          <path d="M76 8h8M194 8h8M198 4v8" stroke="#777" strokeWidth="2" />
          <path d="M90 8h98M100 3v10" stroke="#8c8c8c" strokeWidth="1.800" />
          <circle cx="138" cy="8" r="4" fill="#fff" stroke="#999" />
        </svg>
        100 %
      </StatusBar>
      <Panel>
        <MenuButton>
          <svg width="21" height="21">
            <path d="M1 1h12q7 0 7 7v12H8q-6 0-6-6V6H1z" fill="#8cc45a" stroke="#eee" strokeWidth="1.500" />
            <path d="M6 5v8q0 2 2 2h6q2 0 2-2V9q0-1.500-1.500-1.500T13 9v3M13 9q0-1.500-1.500-1.500T10 9v3" stroke="#fff" strokeWidth="1.700" fill="none" />
          </svg>
          Menú
        </MenuButton>
        <Launchers>
          <svg width="22" height="19">
            <rect x="0" y="0" width="22" height="12" fill="#7da65a" stroke="#aaa" />
            <path d="M0 0h22v3H0z" fill="#ddd" />
            <path d="M3 10h16v7H3z" fill="#8db868" />
            <path d="M3 9h16v2H3z" fill="#4e7a30" />
            <path d="M0 12h3v5H1zM19 12h3l-1 5h-2z" fill="#777" />
          </svg>
          <svg width="18" height="19" viewBox="0 0 19 19">
            <rect width="19" height="18" rx="2" fill="#1f4f90" />
            <circle cx="10" cy="9" r="7" fill="#4b8fd0" />
            <path d="M1 3q3 1 5 4l3 1-2 3q4 4 8-1 2-4 0-7 5 4 2 10-4 6-10 4-8-4-6-14z" fill="#f07818" />
            <path d="M15 3q5 5 1 11-3 3-6 3 6-5 5-14z" fill="#ffc030" />
          </svg>
          <Chrome />
          <svg width="18" height="19">
            <rect x="1" y="1" width="16" height="16" rx="1" fill="#2a2430" stroke="#c8c8c8" strokeWidth="1.500" />
            <path d="M4 5l3 2-3 2M8 10.500h4" stroke="#eee" fill="none" strokeWidth="1.200" />
          </svg>
          <svg width="18" height="19">
            <rect x="1" y="1" width="16" height="16" rx="2" fill="#4c4c4c" stroke="#bbb" strokeWidth="1.500" />
            <text x="9" y="14.500" fontFamily={UI} fontWeight="bold" fontSize="15" textAnchor="middle" fill="#f08a48">S</text>
          </svg>
          <svg width="19" height="19">
            <path d="M1 1h8l1 2h8v4H1z" fill="#dcdcdc" />
            <path d="M0 5h19v13H0z" fill="#86ad5c" />
          </svg>
        </Launchers>
        <Tasks>
          {tasks.map(([icon, text, tone], i) => (
            <Task key={i} $tone={tone}>{icon}{text}</Task>
          ))}
        </Tasks>
        <Tray>
          <svg width="156" height="20" fill="none">
            <path d="M2 4l8-3 8 3q0 10-8 14-8-4-8-14z" fill="#e6e6e6" />
            <circle cx="10" cy="9" r="5" fill="#2f6fc0" />
            <path d="M10 6v6" stroke="#fff" strokeWidth="1.500" />
            <rect x="30" y="1.500" width="12" height="16" rx="6" fill="#3a7ac8" />
            <path d="M33 6.500l6 5-3 3V4l3 3-6 5" stroke="#fff" />
            <path d="M60 3h12v14H60z" fill="#76b900" />
            <path d="M53 10q6-8 14 0-7 7-14 0zM56 10q4-4 8 0-4 4-8 0z" stroke="#5e9400" strokeWidth="1.600" />
            <path d="M60 6q7 0 9 4-3 4-9 5M60 8q4 0 5 2-2 2-5 3" stroke="#2d4700" strokeWidth="1.200" />
            <rect x="79" y="4" width="10" height="12" rx="1" stroke="#d0d0d0" strokeWidth="2" />
            <path d="M87 9a3 3 0 1 0-3 3M84 10l3 3.500" stroke="#d0d0d0" strokeWidth="1.800" />
            <path d="M100 7q0-4 4-4t4 4q0 3-2 4.500v1.500l4 1q1 .5 1 3H97q0-2.500 1-3l4-1v-1.500q-2-1.500-2-4.500z" fill="#d0d0d0" />
            <path d="M117.500 7.500q7-5 13 0M119.500 10.500q4.500-3 9 0M121.500 13.500q2.500-2 5 0" stroke="#d0d0d0" strokeWidth="1.800" />
            <circle cx="124" cy="15.500" r="1.300" fill="#d0d0d0" />
            <path d="M142.500 4v-1.500h3V4h2.500v12h-8V4z" stroke="#d0d0d0" strokeWidth="1.500" />
            <path d="M141 10h6v5h-6z" fill="#999" />
          </svg>
          <TrayText $w={31}>58%</TrayText>
          <TrayText $w={35}>16:38</TrayText>
          <svg width="16" height="14" fill="none">
            <path d="M0 5h2.500l4-3.500v11L2.500 9H0z" fill="#d0d0d0" />
            <path d="M8.500 4.500q2 2.500 0 5M10.500 3q3 4 0 8M12.500 1.500q4 5.500 0 11" stroke="#b8b8b8" />
          </svg>
        </Tray>
      </Panel>
    </Window>
  );
}
